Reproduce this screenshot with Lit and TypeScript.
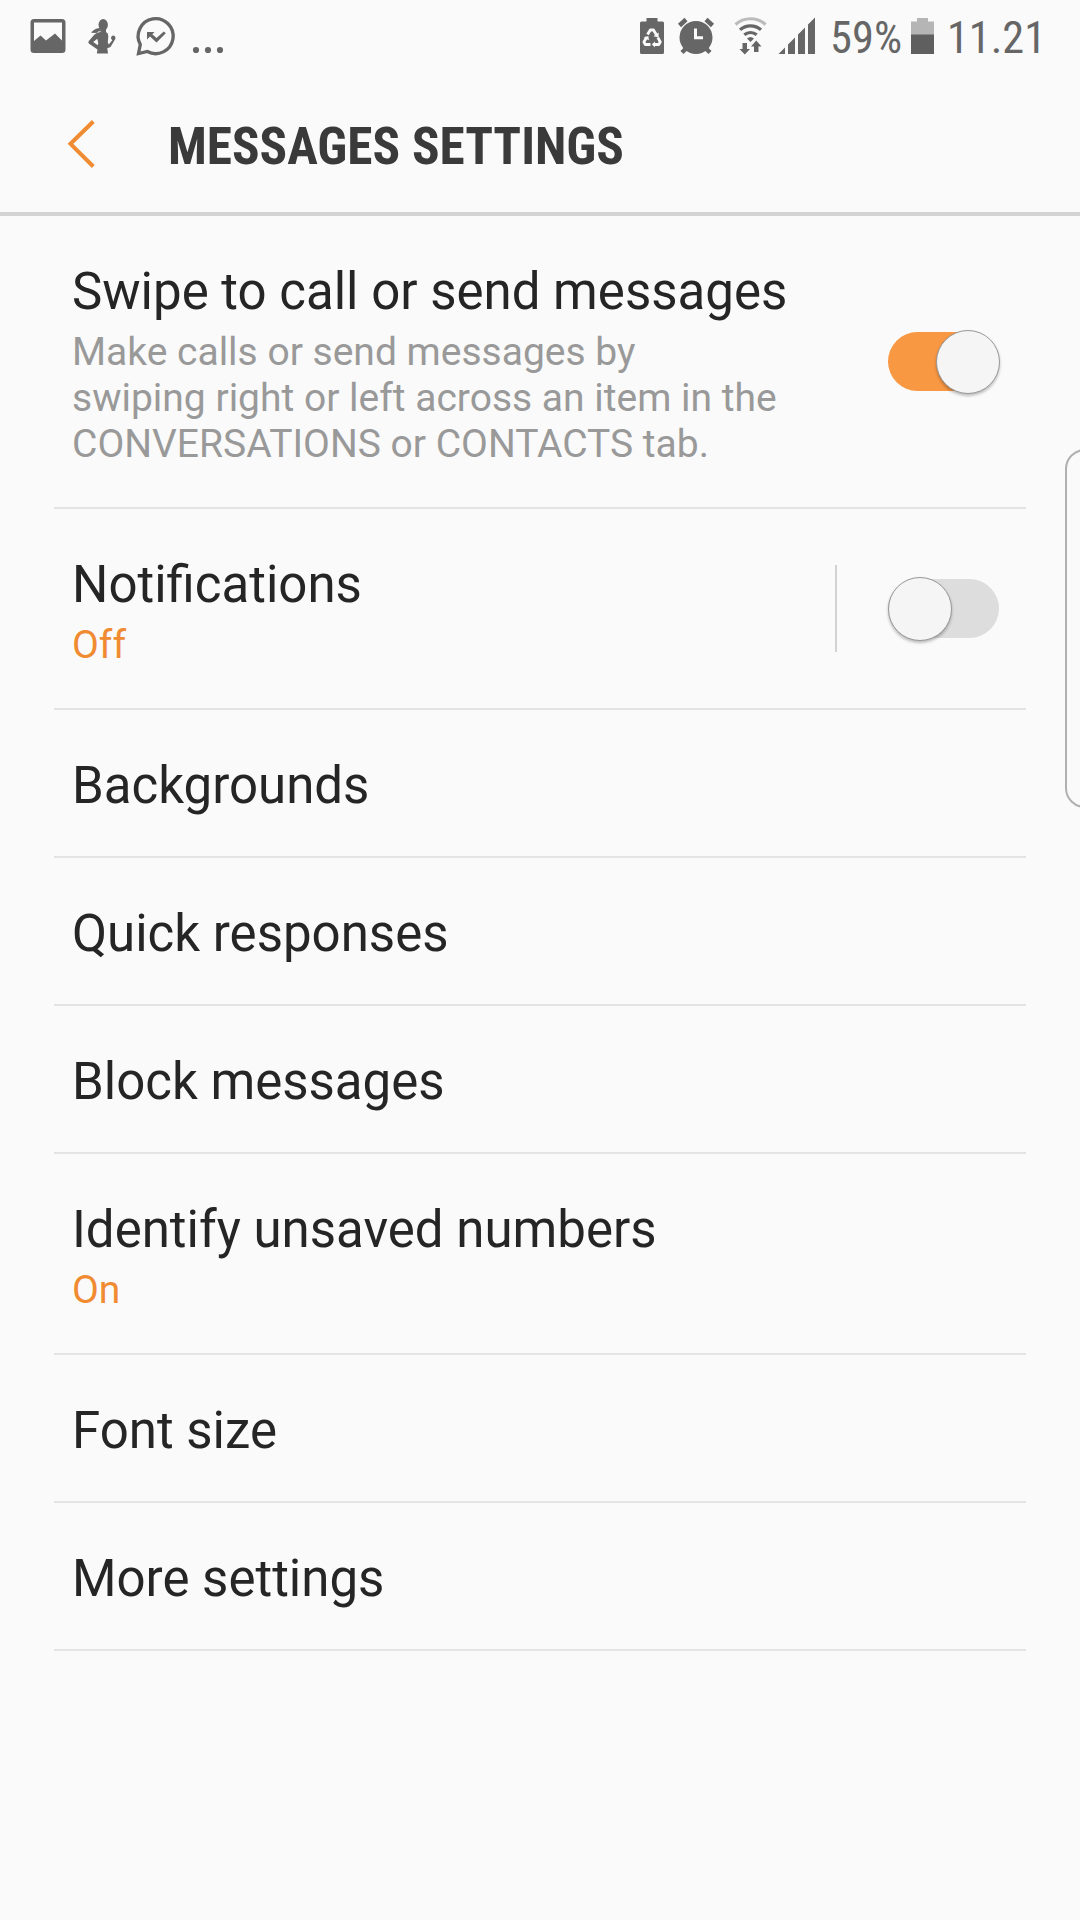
import { LitElement, html, svg, css, nothing } from "lit";
import { customElement, property } from "lit/decorators.js";

interface Item {
  title: string;
  lines?: string[];
  accent?: boolean;
  toggle?: "on" | "off";
  split?: boolean;
}

const ITEMS: Item[] = [
  {
    title: "Swipe to call or send messages",
    lines: [
      "Make calls or send messages by",
      "swiping right or left across an item in the",
      "CONVERSATIONS or CONTACTS tab.",
    ],
    toggle: "on",
  },
  { title: "Notifications", lines: ["Off"], accent: true, toggle: "off", split: true },
  { title: "Backgrounds" },
  { title: "Quick responses" },
  { title: "Block messages" },
  { title: "Identify unsaved numbers", lines: ["On"], accent: true },
  { title: "Font size" },
  { title: "More settings" },
];

@customElement("status-bar")
export class StatusBar extends LitElement {
  static styles = css`
    :host { display: block; height: 72px; }
    .bar { display: block; width: 1080px; height: 72px; fill: #666; }
    .label { font-family: "Roboto Condensed", Roboto, sans-serif; font-size: 45px; }
    .line { fill: none; stroke: #666; }
  `;

  render() {
    return html`<svg class="bar" viewBox="0 0 1080 72">
      ${this.notifications()} ${this.system()}
      <text class="label" x="830" y="52.8" textLength="72" lengthAdjust="spacingAndGlyphs">59%</text>
      <path fill="#b5b5b5" d="M917 18h11v3.5h6V35h-23V21.500h6z" />
      <path fill="#5f5f5f" d="M911 34.500h23V54h-23z" />
      <text class="label" x="947" y="52.800" textLength="99" lengthAdjust="spacingAndGlyphs">11.21</text>
    </svg>`;
  }

  private notifications() {
    return svg`
      <path fill-rule="evenodd" d="M34 19H62Q65.500 19 65.500 22.500V49.500Q65.500 53 62 53H34Q30.500 53 30.500 49.500V22.500Q30.500 19 34 19ZM34 22.500V41L40.500 35.500L46 40.500L55 33.500L62 40.500V22.500Z" />
      <ellipse cx="103.200" cy="24.800" rx="4.700" ry="5.800" />
      <path d="M99.500 27.500L101 31Q98 31 96.500 33L91 32.800Q94 28.500 99.500 28Z" />
      <path fill-rule="evenodd" d="M100.500 29H106V32Q108.300 33 108.300 36L107.800 42.500L108.800 44.500L112.300 40.300L111 38.500Q110.800 35.800 113.500 35.500Q116 36 115.300 39L110.500 47L107.300 48.300L108 53.500H96.800L97.500 49.500L88.800 43.500Q87.800 42.300 88.800 41L94.500 34.500Q97 32 100.500 32ZM97.300 38.800L93.200 42L97.800 45.300L98.300 43Z" />
      <path class="line" stroke-width="3.300" stroke-linejoin="miter" d="M140.300 44.500A17.500 17.500 0 1 1 147.300 51.500L138.500 53.500Z" />
      <path d="M147 32H154.500L152.300 34.300L156.500 38L163.800 31.500L165.800 33.300L156.500 42.500L150 36.500L147 39.500Z" />
      <circle cx="196" cy="50" r="3.100" /><circle cx="208" cy="50" r="3.100" /><circle cx="220" cy="50" r="3.100" />`;
  }

  private system() {
    return svg`
      <path d="M646.500 18H657.500V21.500H662.500Q664 21.500 664 23V52.500Q664 54 662.500 54H641.500Q640 54 640 52.500V23Q640 21.500 641.500 21.500H646.500Z" />
      <g fill="none" stroke="#fafafa" stroke-width="2.800" stroke-linejoin="round">
        <path d="M647.500 34.500L650.300 30H653.500L656.500 35" /><path d="M657.800 37.500L660.300 42L658.800 44.500H653.500" /><path d="M650.500 44.500H645.300L643.900 42L646.800 37" />
      </g>
      <g fill="#fafafa">
        <path d="M658.600 32.500V37.500L653.500 36.300Z" /><path d="M655 41.500V47.300L651.800 44.400Z" /><path d="M643.500 37.800L648.300 36L649 40.300Z" />
      </g>
      <circle cx="696" cy="37.500" r="16.500" />
      <path stroke="#666" stroke-width="4.500" d="M679.500 25.500L686 19.500M712.500 25.500L706 19.500M682 52.500L687 47.500M710 52.500L705 47.500" />
      <path fill="none" stroke="#fafafa" stroke-width="3" d="M695.500 28.500V37.800H703" />
      <g class="line" stroke-width="3.200">
        <path stroke="#bbb" d="M735.500 24.500A22.500 22.500 0 0 1 765.500 24.500" />
        <path d="M740 29.800A16 16 0 0 1 761 29.800" /><path d="M744.300 34.800A10 10 0 0 1 756.700 34.800" />
      </g>
      <path d="M747 38.500Q750.500 35.500 754 38.500L750.500 42Z" />
      <path d="M742.500 43H747V49H750L744.800 54.500L739.500 49H742.500ZM754 52H758.500V46.500H761.500L756.200 40.500L751 46.500H754Z" />
      <path d="M778.500 54L785 47.500V54ZM788 54V44.500L795 37.500V54ZM798 54V34.500L805 27.500V54ZM808 54V24.500L815 17.500V54Z" />`;
  }
}

@customElement("toggle-switch")
export class ToggleSwitch extends LitElement {
  @property({ type: Boolean, reflect: true }) on = false;

  static styles = css`
    :host { display: flex; box-sizing: border-box; width: 112px; height: 64px; align-items: center; }
    .track { display: flex; align-items: center; width: 111px; height: 59px; border-radius: 30px; background: #ddd; }
    .thumb { flex: none; box-sizing: border-box; width: 64px; height: 64px; border-radius: 50%; background: #f5f5f5; border: 1px solid #999; box-shadow: 0 2px 3px rgba(0, 0, 0, 0.25); }
    :host([on]) .track { background: #f99843; justify-content: flex-end; }
    :host([on]) .thumb { margin-right: -1px; }
  `;

  render() {
    return html`<div class="track"><div class="thumb"></div></div>`;
  }
}

@customElement("app-root")
export class AppRoot extends LitElement {
  static styles = css`
    :host { display: block; position: relative; width: 1080px; height: 1920px; overflow: hidden; background: #fafafa; font-family: Roboto, sans-serif; }
    .header { box-sizing: border-box; height: 144px; border-bottom: 4px solid #d3d3d3; }
    .head { display: block; width: 1080px; height: 140px; }
    .heading { font-family: "Roboto Condensed", Roboto, sans-serif; font-size: 52px; font-weight: 700; fill: #3a3a3a; }
    .list { padding: 0 54px; }
    .row { display: flex; align-items: center; box-sizing: border-box; min-height: 148px; padding: 0 26px 0 18px; border-bottom: 2px solid #e4e4e4; }
    .text { flex: 1; padding: 46px 0 40px; white-space: nowrap; }
    .title { font-size: 51px; line-height: 60px; color: #252525; }
    .sub { margin-top: 7px; font-size: 39px; line-height: 46px; color: #999; }
    .accent { color: #f08b32; }
    .split { width: 2px; height: 87px; margin-right: 51px; background: #d3d3d3; }
    .edge { position: absolute; left: 1065px; top: 449px; box-sizing: border-box; width: 60px; height: 359px; border: 2px solid #b0b0b0; border-radius: 20px; }
  `;

  render() {
    return html`
      <status-bar></status-bar>
      <div class="header">
        <svg class="head" viewBox="0 72 1080 140">
          <path fill="none" stroke="#f08b32" stroke-width="4" d="M93.300 121.500L70.500 143.800L93.300 166.500" />
          <text class="heading" x="168" y="164" textLength="456" lengthAdjust="spacingAndGlyphs">MESSAGES SETTINGS</text>
        </svg>
      </div>
      <div class="list">${ITEMS.map((item) => this.row(item))}</div>
      <div class="edge"></div>
    `;
  }

  private row(item: Item) {
    return html`<div class="row">
      <div class="text">
        <div class="title">${item.title}</div>
        ${item.lines
          ? html`<div class="sub ${item.accent ? "accent" : ""}">${item.lines.map((l) => html`<div>${l}</div>`)}</div>`
          : nothing}
      </div>
      ${item.split ? html`<div class="split"></div>` : nothing}
      ${item.toggle ? html`<toggle-switch ?on=${item.toggle === "on"}></toggle-switch>` : nothing}
    </div>`;
  }
}
